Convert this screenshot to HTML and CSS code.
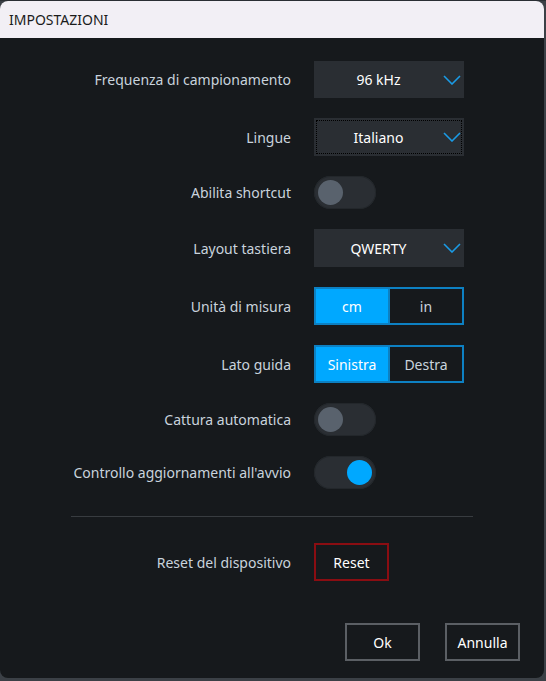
FILE: index.html
```html
<!DOCTYPE html>
<html lang="it">
<head>
<meta charset="utf-8">
<title>Impostazioni</title>
<link rel="stylesheet" href="styles.css">
</head>
<body>
<div class="window">
  <div class="titlebar">IMPOSTAZIONI</div>
  <div class="content">
    <div class="form">
      <div class="label">Frequenza di campionamento</div>
      <div class="select h37"><span class="select-text">96 kHz</span><svg class="chev" width="18" height="10" viewBox="0 0 18 10"><path d="M1 1 L9 9 L17 1" fill="none" stroke="#1a9be6" stroke-width="1.6"/></svg></div>

      <div class="label">Lingue</div>
      <div class="select focus"><span class="select-text">Italiano</span><svg class="chev" width="18" height="10" viewBox="0 0 18 10"><path d="M1 1 L9 9 L17 1" fill="none" stroke="#1a9be6" stroke-width="1.6"/></svg></div>

      <div class="label">Abilita shortcut</div>
      <div class="toggle"><span class="knob"></span></div>

      <div class="label">Layout tastiera</div>
      <div class="select"><span class="select-text">QWERTY</span><svg class="chev" width="18" height="10" viewBox="0 0 18 10"><path d="M1 1 L9 9 L17 1" fill="none" stroke="#1a9be6" stroke-width="1.6"/></svg></div>

      <div class="label">Unità di misura</div>
      <div class="segmented"><span class="seg active">cm</span><span class="seg">in</span></div>

      <div class="label">Lato guida</div>
      <div class="segmented"><span class="seg active">Sinistra</span><span class="seg">Destra</span></div>

      <div class="label">Cattura automatica</div>
      <div class="toggle"><span class="knob"></span></div>

      <div class="label">Controllo aggiornamenti all'avvio</div>
      <div class="toggle on"><span class="knob"></span></div>
    </div>

    <div class="divider"></div>

    <div class="form">
      <div class="label">Reset del dispositivo</div>
      <div class="row-btn"><button class="btn danger">Reset</button></div>
    </div>

    <div class="footer">
      <button class="btn">Ok</button>
      <button class="btn">Annulla</button>
    </div>
  </div>
</div>
</body>
</html>
```

FILE: styles.css
```css
html, body {
  margin: 0;
  padding: 0;
}
body {
  width: 546px;
  height: 681px;
  background: #3b4046;
  font-family: "Noto Sans", "Segoe UI", sans-serif;
  font-size: 14px;
  overflow: hidden;
  position: relative;
}
body::before {
  content: "";
  display: block;
  height: 1px;
  background: #2a2e33;
}
.window {
  width: 544px;
  height: 677px;
  border-radius: 8px;
  overflow: hidden;
  background: #16191c;
  display: flex;
  flex-direction: column;
}
.titlebar {
  height: 37px;
  background: #f2eff5;
  color: #1b1b1b;
  font-size: 14px;
  line-height: 37px;
  padding-left: 9px;
  box-sizing: border-box;
}
.content {
  flex: 1;
  padding-top: 23px;
  display: flex;
  flex-direction: column;
}
.form {
  display: grid;
  grid-template-columns: 291px 150px;
  column-gap: 23px;
  row-gap: 20px;
  align-items: center;
}
.label {
  text-align: right;
  color: #c9d3dd;
  white-space: nowrap;
}
.select {
  height: 38px;
  background: #2a2e33;
  display: flex;
  align-items: center;
  color: #ffffff;
  position: relative;
}
.select.h37 { height: 37px; }
.select.focus {
  outline: 1px dotted #000;
  outline-offset: -3px;
}
.select-text {
  flex: 1;
  text-align: center;
}
.chev {
  margin-right: 3px;
  margin-left: 0;
}
.toggle {
  width: 62px;
  height: 33px;
  border-radius: 17px;
  background: #2a2e33;
  box-shadow: inset 0 0 0 1px #23272b;
  display: flex;
  align-items: center;
  padding: 0 4px;
  box-sizing: border-box;
}
.knob {
  width: 25px;
  height: 25px;
  border-radius: 50%;
  background: #59626d;
}
.toggle.on {
  justify-content: flex-end;
}
.toggle.on .knob {
  background: #00a8ff;
}
.segmented {
  height: 38px;
  display: flex;
  border: 2px solid #0d80c2;
  box-sizing: border-box;
}
.seg {
  flex: 1;
  display: flex;
  align-items: center;
  justify-content: center;
  color: #c9d3dd;
}
.seg + .seg {
  border-left: 2px solid #0d80c2;
}
.seg.active {
  background: #00a8ff;
  color: #ffffff;
}
.divider {
  height: 1px;
  background: #383c40;
  margin: 27px 71px 26px 71px;
}
.row-btn {
  display: flex;
}
.btn {
  width: 75px;
  height: 38px;
  background: #16191c;
  border: 2px solid #5b5f64;
  color: #ffffff;
  font-family: inherit;
  font-size: 14px;
  padding: 0;
  box-sizing: border-box;
}
.btn.danger {
  border-color: #8a0d12;
}
.footer {
  display: flex;
  justify-content: flex-end;
  gap: 25px;
  padding-right: 24px;
  margin-top: 42px;
}
```
